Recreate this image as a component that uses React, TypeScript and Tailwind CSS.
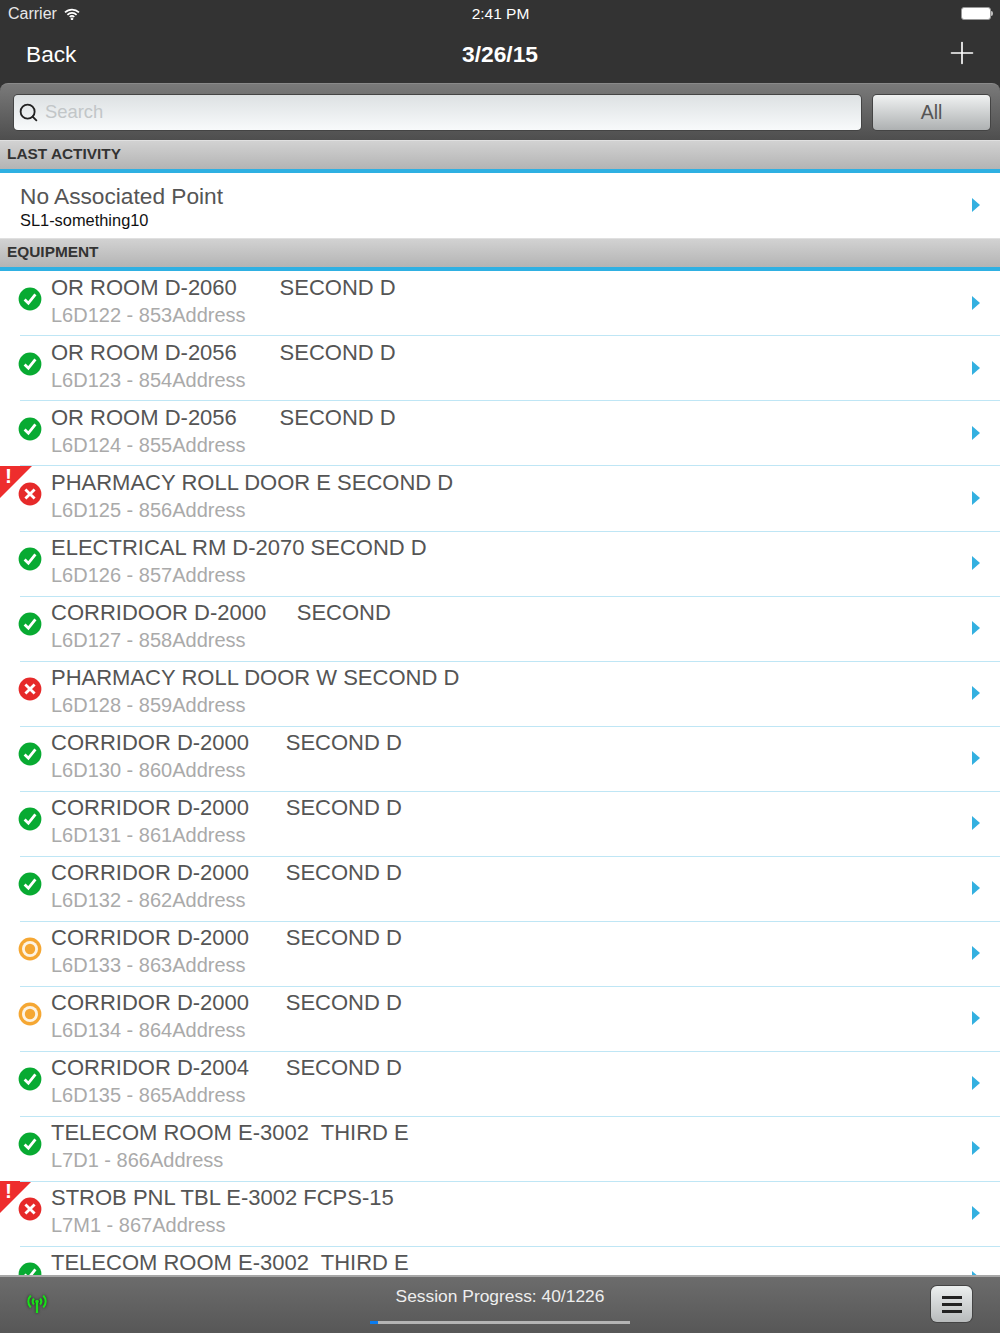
import { Plus, Search } from 'lucide-react'

type Status = 'ok' | 'fail' | 'pending'

type Row = { title: string; sub?: string; status: Status; flag?: boolean }

const ROWS: Row[] = [
  { title: 'OR ROOM D-2060       SECOND D', sub: 'L6D122 - 853Address', status: 'ok' },
  { title: 'OR ROOM D-2056       SECOND D', sub: 'L6D123 - 854Address', status: 'ok' },
  { title: 'OR ROOM D-2056       SECOND D', sub: 'L6D124 - 855Address', status: 'ok' },
  { title: 'PHARMACY ROLL DOOR E SECOND D', sub: 'L6D125 - 856Address', status: 'fail', flag: true },
  { title: 'ELECTRICAL RM D-2070 SECOND D', sub: 'L6D126 - 857Address', status: 'ok' },
  { title: 'CORRIDOOR D-2000     SECOND', sub: 'L6D127 - 858Address', status: 'ok' },
  { title: 'PHARMACY ROLL DOOR W SECOND D', sub: 'L6D128 - 859Address', status: 'fail' },
  { title: 'CORRIDOR D-2000      SECOND D', sub: 'L6D130 - 860Address', status: 'ok' },
  { title: 'CORRIDOR D-2000      SECOND D', sub: 'L6D131 - 861Address', status: 'ok' },
  { title: 'CORRIDOR D-2000      SECOND D', sub: 'L6D132 - 862Address', status: 'ok' },
  { title: 'CORRIDOR D-2000      SECOND D', sub: 'L6D133 - 863Address', status: 'pending' },
  { title: 'CORRIDOR D-2000      SECOND D', sub: 'L6D134 - 864Address', status: 'pending' },
  { title: 'CORRIDOR D-2004      SECOND D', sub: 'L6D135 - 865Address', status: 'ok' },
  { title: 'TELECOM ROOM E-3002  THIRD E', sub: 'L7D1 - 866Address', status: 'ok' },
  { title: 'STROB PNL TBL E-3002 FCPS-15', sub: 'L7M1 - 867Address', status: 'fail', flag: true },
  { title: 'TELECOM ROOM E-3002  THIRD E', status: 'ok' },
]

function StatusIcon({ status }: { status: Status }) {
  if (status === 'ok') {
    return (
      <svg width="24" height="24" viewBox="0 0 24 24">
        <circle cx="12" cy="12" r="11.4" fill="#08aa32" />
        <path d="M6.6 12.4l3.8 3.8 7-8.8" fill="none" stroke="#fff" strokeWidth="2.8" />
      </svg>
    )
  }
  if (status === 'fail') {
    return (
      <svg width="24" height="24" viewBox="0 0 24 24">
        <circle cx="12" cy="12" r="11.4" fill="#e62a2a" />
        <path d="M7.4 7.4l9.2 9.2M16.6 7.4l-9.2 9.2" fill="none" stroke="#fff" strokeWidth="2.8" />
      </svg>
    )
  }
  return (
    <svg width="24" height="24" viewBox="0 0 24 24">
      <circle cx="12" cy="12" r="11.4" fill="#f5a733" />
      <circle cx="12" cy="12" r="8" fill="#fdf3e3" />
      <circle cx="12" cy="12" r="5.2" fill="#f5a733" />
    </svg>
  )
}

function Chevron() {
  return <span className="mb-[2px] h-0 w-0 border-y-[7px] border-l-[8px] border-y-transparent border-l-[#33b0e0]" />
}

function SectionHeader({ label }: { label: string }) {
  return (
    <div className="shrink-0">
      <div className="flex h-[29px] items-center border-t border-[#e0e0e0] bg-gradient-to-b from-[#d2d2d2] to-[#b4b4b4] pb-[3px] pl-[7px] text-[15.4px] leading-none font-bold text-[#333]">
        {label}
      </div>
      <div className="h-1 bg-[#2fb0e2]" />
    </div>
  )
}

function EquipmentRow({ row, index }: { row: Row; index: number }) {
  return (
    <li className="relative h-[65px] shrink-0 bg-white">
      {row.flag && (
        <div className="absolute top-0 left-0 h-[32px] w-[32px] bg-[#ee2d2d] [clip-path:polygon(0_0,100%_0,0_100%)]">
          <span className="absolute top-0 left-[5px] text-[21px] leading-[20px] font-bold text-white">!</span>
        </div>
      )}
      <div className="flex h-full items-center pr-[20px] pl-[18px]">
        <div className="w-[33px] shrink-0 pb-[10px]">
          <StatusIcon status={row.status} />
        </div>
        <div className="h-full min-w-0 flex-1 pt-[3px]">
          <div className="text-[22px] leading-[28px] whitespace-pre text-[#555]">{row.title}</div>
          {row.sub && <div className="text-[20px] leading-[26px] whitespace-pre text-[#aaa]">{row.sub}</div>}
        </div>
        <Chevron />
      </div>
      <div className={`absolute right-0 left-[20px] z-10 h-px bg-[#bfe6f5] ${index < 3 ? 'bottom-0' : '-bottom-px'}`} />
    </li>
  )
}

export default function App() {
  return (
    <div className="flex h-[1333px] flex-col overflow-hidden bg-white font-['Liberation_Sans',Arial,sans-serif]">
      <header className="h-[83px] shrink-0 bg-[#333] text-white">
        <div className="flex h-[27px] items-center justify-between pr-[7px] pl-2 text-[16px]">
          <div className="flex flex-1 items-center gap-[7px] text-[#e8e8e8]">
            Carrier
            <svg width="16" height="12" viewBox="0 0 16 12" fill="none" stroke="#fff" strokeWidth="1.7">
              <path d="M1 4.4a10 10 0 0 1 14 0M3.4 6.8a6.6 6.6 0 0 1 9.2 0M5.7 9a3.3 3.3 0 0 1 4.6 0" />
              <circle cx="8" cy="10.8" r="0.5" fill="#fff" />
            </svg>
          </div>
          <span className="pt-px text-[15.5px]">2:41 PM</span>
          <div className="flex flex-1 items-center justify-end">
            <div className="h-[13px] w-[30px] rounded-[3px] border border-[#999] bg-white" />
            <div className="h-[5px] w-[2px] rounded-r-sm bg-[#bbb]" />
          </div>
        </div>
        <div className="flex h-[56px] items-center justify-between px-[26px] pb-[1px]">
          <span className="flex-1 text-[22.7px]">Back</span>
          <span className="text-[22.8px] font-bold">3/26/15</span>
          <div className="flex flex-1 justify-end">
            <Plus size={36} strokeWidth={1.1} className="mr-[-6px] mb-[4px]" />
          </div>
        </div>
      </header>

      <div className="h-[57px] shrink-0 bg-[#333]">
        <div className="flex h-full items-center gap-[12px] rounded-t-[8px] border-t border-[#8a8a8a] bg-gradient-to-b from-[#7a7a7a] to-[#4e4e4e] pr-[10px] pl-[14px]">
          <div className="flex h-[35px] flex-1 items-center rounded-[4px] bg-gradient-to-b from-[#dde1e3] to-[#f8fafb] pl-[4px] shadow-[0_0_0_1px_#444]">
            <Search size={21} strokeWidth={2.1} className="text-[#222]" />
            <span className="ml-[6px] text-[18.4px] text-[#c2c6c8]">Search</span>
          </div>
          <div className="flex h-[35px] w-[117px] items-center justify-center rounded-[4px] bg-gradient-to-b from-[#f0f2f2] to-[#aeb1b2] pt-[2px] text-[19.5px] text-[#555] shadow-[0_0_0_1px_#444]">
            All
          </div>
        </div>
      </div>

      <SectionHeader label="LAST ACTIVITY" />
      <div className="flex h-[65px] shrink-0 items-center justify-between pr-[20px] pl-[20px]">
        <div>
          <div className="text-[22.7px] leading-[26px] text-[#555]">No Associated Point</div>
          <div className="mt-[2px] text-[16.4px] leading-[18px] text-[#111]">SL1-something10</div>
        </div>
        <Chevron />
      </div>

      <SectionHeader label="EQUIPMENT" />
      <ul className="min-h-0 flex-1 overflow-hidden">
        {ROWS.map((row, index) => (
          <EquipmentRow key={index} row={row} index={index} />
        ))}
      </ul>

      <footer className="relative flex h-[58px] shrink-0 items-start justify-between border-t-[2px] border-[#a8a8a8] bg-gradient-to-b from-[#6c6c6c] to-[#575757] pr-[28px] pl-[27px]">
        <svg width="20" height="20" viewBox="0 0 20 20" fill="none" stroke="#18e018" strokeWidth="2.1" className="mt-[17px] overflow-visible drop-shadow-[0_0_1.5px_#222]">
          <path d="M10 8v11" strokeWidth="2.3" />
          <circle cx="10" cy="7.5" r="1.8" fill="#18e018" stroke="none" />
          <path d="M7 4.5a4.5 4.5 0 0 0 0 6M13 4.5a4.5 4.5 0 0 1 0 6M3.8 1.5a8.5 8.5 0 0 0 0 12M16.2 1.5a8.5 8.5 0 0 1 0 12" />
        </svg>
        <div className="absolute top-[9px] left-[370px] flex w-[260px] flex-col items-center">
          <span className="text-[17.4px] leading-[20px] text-[#eee]">Session Progress: 40/1226</span>
          <div className="mt-[15px] h-[3px] w-full bg-[#b4b4b4]">
            <div className="h-full bg-[#0a7cf0]" style={{ width: `${(40 / 1226) * 100}%` }} />
          </div>
        </div>
        <div className="mt-[9px] flex h-[36px] w-[41px] flex-col items-center justify-center gap-[4px] rounded-[6px] bg-gradient-to-b from-[#ecefef] to-[#b8bbbc] shadow-[0_0_0_1px_#444]">
          <span className="h-[3px] w-[20px] bg-[#222]" />
          <span className="h-[3px] w-[20px] bg-[#222]" />
          <span className="h-[3px] w-[20px] bg-[#222]" />
        </div>
      </footer>
    </div>
  )
}
